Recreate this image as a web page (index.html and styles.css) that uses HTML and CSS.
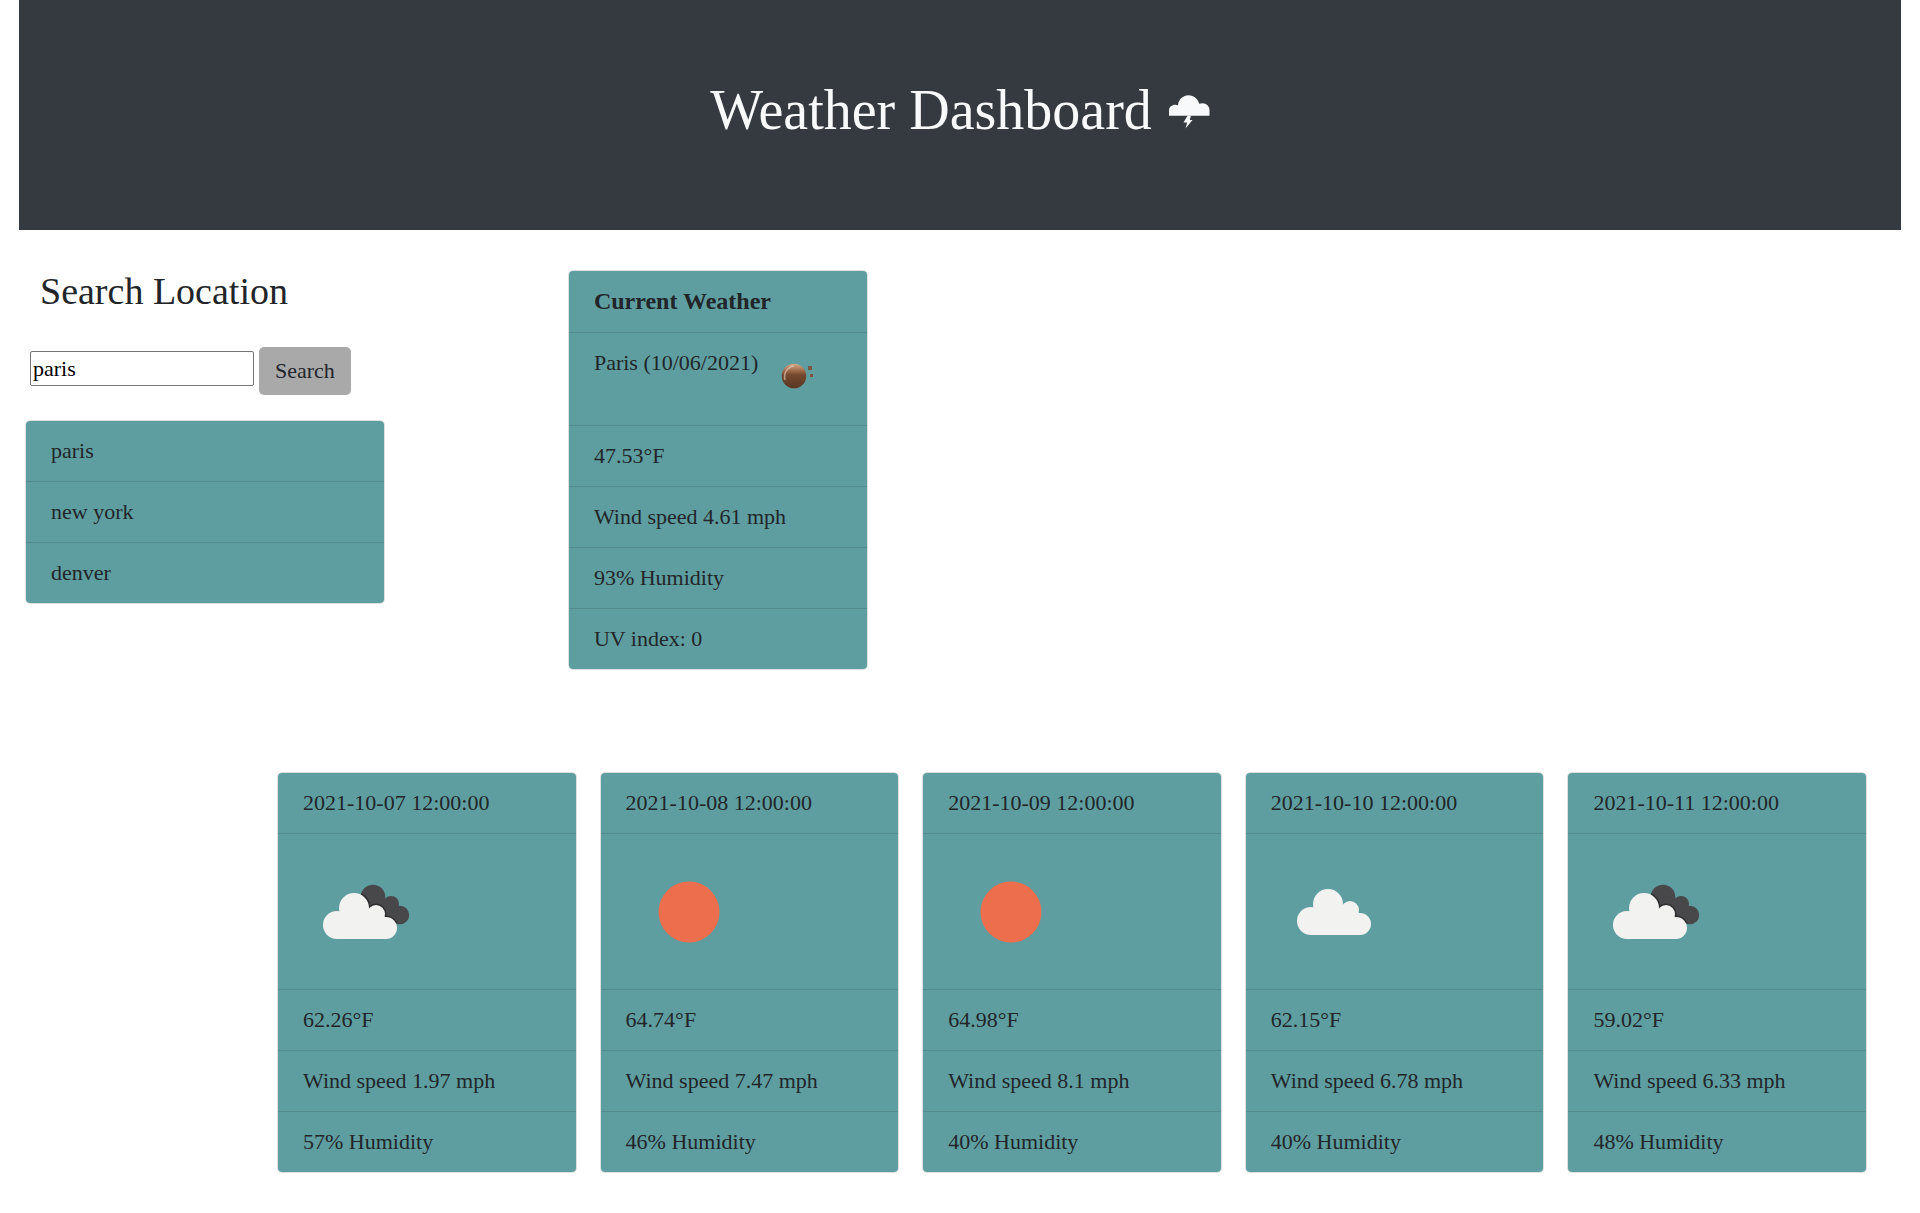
FILE: index.html
```html
<!DOCTYPE html>
<html lang="en">
<head>
  <meta charset="utf-8">
  <meta name="viewport" content="width=device-width, initial-scale=1">
  <title>Weather Dashboard</title>
  <link rel="stylesheet" href="styles.css">
</head>
<body>
  <svg class="sprite" aria-hidden="true">
    <defs>
      <g id="cloud">
        <circle cx="51" cy="59" r="15"/>
        <circle cx="34" cy="76" r="14"/>
        <circle cx="73" cy="65" r="9"/>
        <circle cx="83" cy="79" r="11"/>
        <path d="M34 90V64l9-4h34l6 10v20z"/>
      </g>
      <g id="back-cloud">
        <circle cx="70" cy="48" r="12.3"/>
        <circle cx="88" cy="55" r="8"/>
        <circle cx="97" cy="66" r="9.2"/>
        <path d="M62 50h26l6 12-2 12H78z"/>
      </g>
      <clipPath id="back-clip">
        <circle cx="70" cy="48" r="12.3"/>
        <circle cx="88" cy="55" r="8"/>
        <circle cx="97" cy="66" r="9.2"/>
        <path d="M62 50h26l6 12-2 12H78z"/>
      </clipPath>
      <symbol id="broken-clouds" viewBox="0 0 125 125">
        <use href="#back-cloud" fill="#484749"/>
        <g clip-path="url(#back-clip)"><use href="#cloud" fill="#2e2d2f" stroke="#2e2d2f" stroke-width="3"/></g>
        <use href="#cloud" fill="#f2f2f0"/>
      </symbol>
      <symbol id="scattered-clouds" viewBox="0 0 125 125">
        <use href="#cloud" x="6" y="-4" fill="#f2f2f0"/>
      </symbol>
      <symbol id="clear-sky" viewBox="0 0 125 125">
        <circle cx="63" cy="63" r="30.5" fill="#ec6e4c"/>
      </symbol>
    </defs>
  </svg>

  <header class="banner">
    <h1 class="banner-title">Weather Dashboard
      <svg class="banner-icon" viewBox="0 0 41 34" aria-hidden="true">
        <path d="M0 20.700V15.500C0 12 3 9.800 6 9.800q1.500 0 3 .400C9.500 4.500 14 .3 19.500.3 25 .3 29 4 30.200 8.800q1.500-.500 3.300-.500c4 0 7 3 7 7v5.400z"/>
        <path d="M18.500 20.700h3.500l-1.300 4.300h2.800L16.500 33.500l1.700-6H14.500z"/>
      </svg>
    </h1>
  </header>

  <main>
    <div class="overview">
      <section class="search">
        <h2 class="search-title"><label for="location">Search Location</label></h2>
        <form class="search-form">
          <input class="search-input" id="location" type="text" value="paris">
          <button class="search-button" type="button">Search</button>
        </form>
        <ul class="card history">
          <li class="row">paris</li>
          <li class="row">new york</li>
          <li class="row">denver</li>
        </ul>
      </section>

      <section>
        <ul class="card current">
          <li class="row"><strong class="current-title">Current Weather</strong></li>
          <li class="row city">Paris (10/06/2021)
            <svg class="city-icon" viewBox="0 0 62 62" role="img" aria-label="Clear night">
              <defs>
                <linearGradient id="moon" x1="0" y1="0" x2="0" y2="1">
                  <stop offset="0" stop-color="#d9a98a"/>
                  <stop offset=".3" stop-color="#9a6747"/>
                  <stop offset=".45" stop-color="#74492f"/>
                  <stop offset="1" stop-color="#593723"/>
                </linearGradient>
              </defs>
              <circle cx="31" cy="28" r="12.300" fill="url(#moon)"/>
              <path d="M22 32a11 11 0 0 1 9-14" fill="none" stroke="#ecd6c6" stroke-width="1.500" opacity=".6"/>
              <path d="M45 18h4v4h-4zM47 26h3v3h-3z" fill="#7b5540"/>
            </svg>
          </li>
          <li class="row">47.53°F</li>
          <li class="row">Wind speed 4.61 mph</li>
          <li class="row">93% Humidity</li>
          <li class="row">UV index: 0</li>
        </ul>
      </section>
    </div>

    <section class="forecast">
      <ul class="card">
        <li class="row">2021-10-07 12:00:00</li>
        <li class="row"><svg class="day-icon" role="img" aria-label="Broken clouds"><use href="#broken-clouds"/></svg></li>
        <li class="row">62.26°F</li>
        <li class="row">Wind speed 1.97 mph</li>
        <li class="row">57% Humidity</li>
      </ul>
      <ul class="card">
        <li class="row">2021-10-08 12:00:00</li>
        <li class="row"><svg class="day-icon" role="img" aria-label="Clear sky"><use href="#clear-sky"/></svg></li>
        <li class="row">64.74°F</li>
        <li class="row">Wind speed 7.47 mph</li>
        <li class="row">46% Humidity</li>
      </ul>
      <ul class="card">
        <li class="row">2021-10-09 12:00:00</li>
        <li class="row"><svg class="day-icon" role="img" aria-label="Clear sky"><use href="#clear-sky"/></svg></li>
        <li class="row">64.98°F</li>
        <li class="row">Wind speed 8.1 mph</li>
        <li class="row">40% Humidity</li>
      </ul>
      <ul class="card">
        <li class="row">2021-10-10 12:00:00</li>
        <li class="row"><svg class="day-icon" role="img" aria-label="Scattered clouds"><use href="#scattered-clouds"/></svg></li>
        <li class="row">62.15°F</li>
        <li class="row">Wind speed 6.78 mph</li>
        <li class="row">40% Humidity</li>
      </ul>
      <ul class="card">
        <li class="row">2021-10-11 12:00:00</li>
        <li class="row"><svg class="day-icon" role="img" aria-label="Broken clouds"><use href="#broken-clouds"/></svg></li>
        <li class="row">59.02°F</li>
        <li class="row">Wind speed 6.33 mph</li>
        <li class="row">48% Humidity</li>
      </ul>
    </section>
  </main>
</body>
</html>
```
FILE: styles.css
```css
*,
*::before,
*::after {
  box-sizing: border-box;
}

body {
  margin: 0;
  padding: 0 19px 40px;
  background: #fff;
  color: #212529;
  font-family: "Liberation Serif", serif;
  font-size: 22px;
  line-height: 30px;
}

.sprite {
  display: block;
  width: 0;
  height: 0;
}

.banner {
  padding: 80px 20px 90px;
  background: #353a41;
  color: #f8f9fa;
}

.banner-title {
  display: flex;
  justify-content: center;
  align-items: baseline;
  gap: 17px;
  margin: 0;
  font-size: 56px;
  font-weight: 400;
  line-height: 60px;
}

.banner-icon {
  width: 41px;
  height: 34px;
  fill: currentColor;
}

.overview {
  display: grid;
  grid-template-columns: 7fr 17fr;
  margin-bottom: 102px;
}

.search {
  padding-top: 36px;
}

.search-title {
  margin: 0 0 31px 21px;
  font-size: 38px;
  font-weight: 400;
  line-height: 50px;
}

.search-form {
  display: flex;
  align-items: center;
  gap: 5px;
  margin: 0 0 25px 11px;
}

.search-input {
  width: 224px;
  height: 35px;
  margin-bottom: 5px;
  padding: 1px 2px;
  border: 1px solid #767676;
  border-radius: 2px;
  color: #000;
  font: inherit;
}

.search-button {
  height: 48px;
  padding: 0 16px;
  border: 0;
  border-radius: 5px;
  background: #a9a9a9;
  color: #212529;
  font: inherit;
}

.card {
  margin: 0;
  padding: 0;
  overflow: hidden;
  border: 1px solid #dfdfdf;
  border-radius: 5px;
  list-style: none;
}

.history {
  max-width: 360px;
  margin-left: 6px;
}

.current {
  max-width: 300px;
  margin-top: 40px;
}

.row {
  padding: 15px 25px;
  border-bottom: 1px solid #538a8c;
  background: #5f9ea0;
}

.row:last-child {
  border-bottom: 0;
}

.current-title {
  font-size: 24px;
}

.city {
  display: flex;
  gap: 5px;
}

.city-icon {
  flex: none;
  width: 62px;
  height: 62px;
}

.day-icon {
  display: block;
  width: 125px;
  height: 125px;
}

.forecast {
  display: grid;
  grid-template-columns: repeat(5, minmax(0, 1fr));
  gap: 23px;
  padding: 0 34px 0 258px;
}

@media (max-width: 1500px) {
  .forecast {
    grid-template-columns: repeat(auto-fill, minmax(260px, 1fr));
    padding: 0 6px;
  }
}

@media (max-width: 900px) {
  .overview {
    grid-template-columns: 1fr;
  }
}
```
